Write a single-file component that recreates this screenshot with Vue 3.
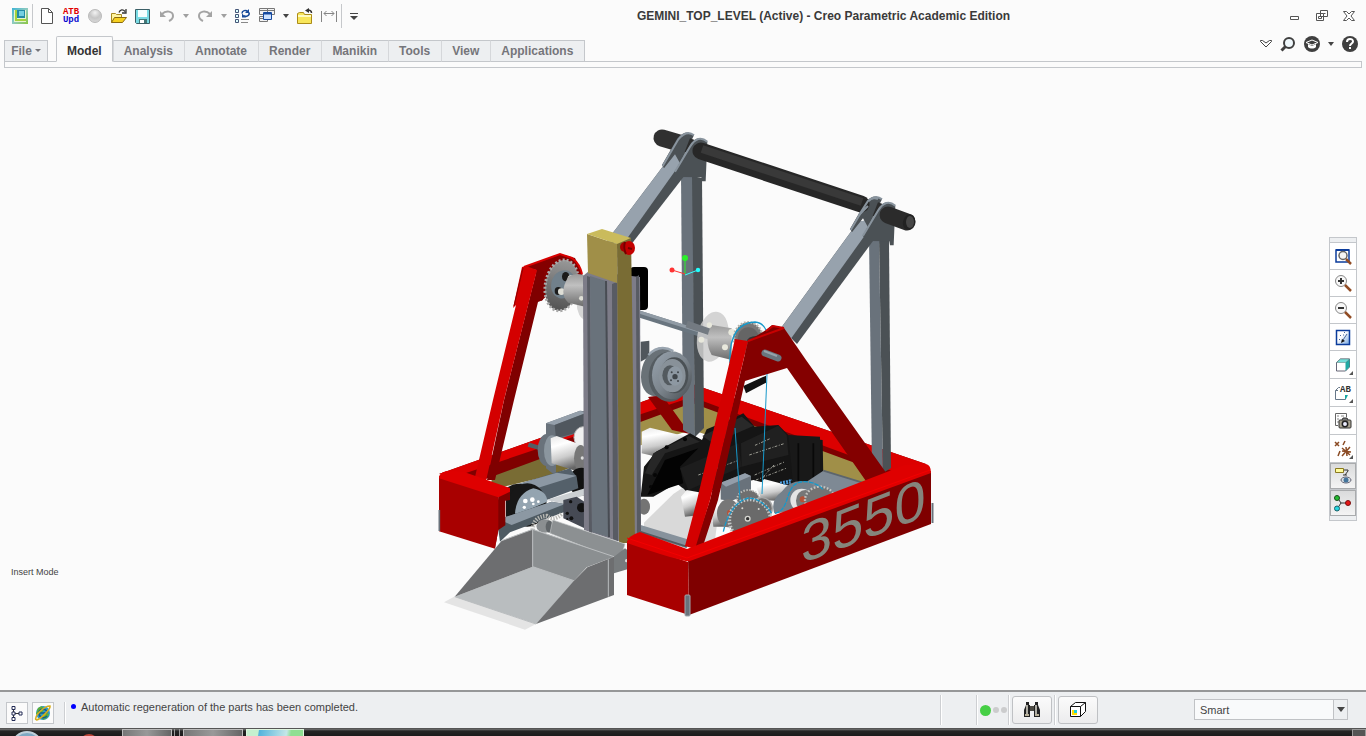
<script setup>
import { ref } from 'vue'

const tabs = ['Model', 'Analysis', 'Annotate', 'Render', 'Manikin', 'Tools', 'View', 'Applications']
const activeTab = ref('Model')
const filter = ref('Smart')
</script>

<template>
  <div class="app">
    <header class="titlebar">
      <div class="quick">
        <button class="tool" aria-label="Creo">
          <svg width="16" height="16" viewBox="0 0 16 16">
            <defs><linearGradient id="appg" x1="0" y1="0" x2="1" y2="1"><stop offset="0" stop-color="#3fb4d4" /><stop offset=".5" stop-color="#8fcbc0" /><stop offset="1" stop-color="#8cc63e" /></linearGradient></defs>
            <rect width="16" height="16" fill="url(#appg)" /><rect x="2" y="2" width="12" height="12" fill="#e6f4d0" /><path d="M3 2v11h11v-2H5V2z" fill="#a5d23c" /><rect x="5" y="2" width="8" height="8" fill="#238ba5" /><rect x="7" y="3" width="5" height="5" fill="#74cfe0" />
          </svg>
        </button>
        <span class="sep"></span>
        <button class="tool" aria-label="New">
          <svg width="16" height="16" viewBox="0 0 16 16"><path d="M2.500.5h7l4 4v11h-11z" fill="#fff" stroke="#555" /><path d="M9.500.5v4h4" fill="none" stroke="#555" /></svg>
        </button>
        <button class="tool atb" aria-label="ATB Update"><span class="red">ATB</span><span class="blue">Upd</span></button>
        <button class="tool" aria-label="Stop">
          <svg width="16" height="16" viewBox="0 0 16 16"><defs><radialGradient id="ball" cx=".5" cy=".25" r=".75"><stop offset="0" stop-color="#f2f2f2" /><stop offset=".55" stop-color="#c6c6c6" /><stop offset="1" stop-color="#d9d9d9" /></radialGradient></defs><circle cx="8" cy="8" r="6.500" fill="url(#ball)" stroke="#bbb" /></svg>
        </button>
        <button class="tool" aria-label="Open">
          <svg width="16" height="16" viewBox="0 0 16 16"><path d="M.5 14.500v-9h4l1 1h5v3" fill="#fff5a0" stroke="#a88a20" /><path d="M.5 14.500l3-5h12l-4 5z" fill="#f6d020" stroke="#8a6a10" /><path d="M8 4.500c1-3 4-3.500 6-1M15 1v4h-4" fill="none" stroke="#333" stroke-width="1.300" /></svg>
        </button>
        <button class="tool" aria-label="Save">
          <svg width="16" height="16" viewBox="0 0 16 16"><path d="M.5 1.500h14v14h-13l-1-1z" fill="#79dbe4" stroke="#3b5f66" /><rect x="3" y="2" width="9" height="7" fill="#f5ffff" /><rect x="4" y="11" width="8" height="4" fill="#477" /><rect x="5" y="12" width="4" height="3" fill="#fff" /></svg>
        </button>
        <button class="tool" aria-label="Undo">
          <svg width="16" height="16" viewBox="0 0 16 16"><path d="M3 6c4-4 11-3 11 2 0 3-2 4-4 5" fill="none" stroke="#a4a4a4" stroke-width="2" /><path d="M1 3v6h6z" fill="#a4a4a4" /></svg>
        </button>
        <button class="drop" aria-label="Undo list"><i class="tri pale"></i></button>
        <button class="tool" aria-label="Redo">
          <svg width="16" height="16" viewBox="0 0 16 16"><path d="M13 6C9 2 2 3 2 8c0 3 2 4 4 5" fill="none" stroke="#a4a4a4" stroke-width="2" /><path d="M15 3v6H9z" fill="#a4a4a4" /></svg>
        </button>
        <button class="drop" aria-label="Redo list"><i class="tri pale"></i></button>
        <button class="tool" aria-label="Regenerate">
          <svg width="16" height="16" viewBox="0 0 16 16"><path d="M.5 1.500h3v3h-3zM.5 6.500h3v3h-3zM.5 11.500h3v3h-3z" fill="#dff" stroke="#457" /><path d="M6 11.500h8M6 14.500h7" stroke="#888" /><path d="M7 5.500c0-3 4-4 5.500-2M14 4.500c1 3-3 5-5 3" fill="none" stroke="#174a9a" stroke-width="1.500" /><path d="M14 1v4h-4zM7 9.500v-4l4 4z" fill="#174a9a" /></svg>
        </button>
        <button class="tool" aria-label="Windows">
          <svg width="16" height="16" viewBox="0 0 16 16"><path d="M.5.500h8v6h-8zM8.500.5h7v6h-7zM.5 8.500h8v5h-8z" fill="#f3f3f3" stroke="#777" /><path d="M1 2.500h7M9 2.500h6M1 10.500h7" stroke="#777" /><path d="M4.500 4.500h8v7h-8z" fill="#cfe3ff" stroke="#164aa0" /><path d="M5 5.500h7" stroke="#164aa0" stroke-width="2" /></svg>
        </button>
        <button class="drop" aria-label="Window list"><i class="tri"></i></button>
        <button class="tool" aria-label="Close folder">
          <svg width="16" height="16" viewBox="0 0 16 16"><path d="M.5 15.500v-10l2-1h4l1 2h7v9z" fill="#f8e65a" stroke="#ac8c18" /><path d="M1 8h13" stroke="#fffbc0" stroke-width="2" /><path d="M14.500 5c0-3-2-3-4-3" fill="none" stroke="#333" stroke-width="1.500" /><path d="M8 2.500l4-2.500v5z" fill="#333" /></svg>
        </button>
        <button class="tool" aria-label="Spacing">
          <svg width="16" height="16" viewBox="0 0 16 16"><path d="M.5 3v11M15.500 3v11M3 5.500h10M5.500 3L3 5.500 5.500 8M10.500 3L13 5.500 10.500 8" fill="none" stroke="#858585" /></svg>
        </button>
        <span class="sep last"></span>
        <button class="tool" aria-label="Customize">
          <svg width="16" height="16" viewBox="0 0 16 16"><path d="M4 5.500h8" stroke="#444" /><path d="M4 8h8l-4 4z" fill="#444" /></svg>
        </button>
      </div>
      <h1>GEMINI_TOP_LEVEL (Active) - Creo Parametric Academic Edition</h1>
      <div class="winctl">
        <button aria-label="Minimize"><svg width="12" height="12" viewBox="0 0 12 12"><path d="M1.500 6.500h8v3h-8z" fill="#fff" stroke="#555" /></svg></button>
        <button aria-label="Restore"><svg width="12" height="12" viewBox="0 0 12 12"><path d="M4.500.5h7v6h-7zM.5 3.500h7v7h-7z" fill="#fff" stroke="#555" /><path d="M2.500 6.500h3v2h-3zM7.500 3.500h2" fill="none" stroke="#555" /></svg></button>
        <button aria-label="Close"><svg width="12" height="12" viewBox="0 0 12 12"><path d="M.5 1.500h3L6 4l2.500-2.500h3L8 6l3.500 4.500h-3L6 8l-2.500 2.500h-3L4 6z" fill="#fff" stroke="#555" /></svg></button>
      </div>
    </header>

    <nav class="tabs">
      <button class="file">File<i class="tri small"></i></button>
      <button v-for="t in tabs" :key="t" class="tab" :class="{ active: t === activeTab }" @click="activeTab = t">{{ t }}</button>
      <span class="fill"></span>
      <div class="helpers">
        <button aria-label="Collapse"><svg width="12" height="10" viewBox="0 0 12 10"><path d="M.5 1.500h2L6 4l3.500-2.500h2v1L6 8 .5 2.500z" fill="#fff" stroke="#444" /></svg></button>
        <button aria-label="Search"><svg width="16" height="16" viewBox="0 0 16 16"><circle cx="9" cy="7" r="5" fill="#f0f8fc" stroke="#3f3f3f" stroke-width="2" /><path d="M5.500 10.500L1.500 14.500" stroke="#3f3f3f" stroke-width="3" /></svg></button>
        <button aria-label="Learning"><svg width="16" height="16" viewBox="0 0 16 16"><circle cx="8" cy="8" r="8" fill="#3f3f3f" /><path d="M2 6.500L8 4l6 2.500L8 9z" fill="none" stroke="#fff" /><path d="M4 8v3c2 2 6 2 8 0V8L8 10z" fill="#fff" /></svg></button>
        <button aria-label="Learning list"><i class="tri"></i></button>
        <button aria-label="Help"><svg width="16" height="16" viewBox="0 0 16 16"><circle cx="8" cy="8" r="8" fill="#3f3f3f" /><path d="M5 6c0-4 6-4 6-.5C11 7.500 8 7.500 8 10" fill="none" stroke="#fff" stroke-width="2" /><rect x="7" y="11" width="2" height="2" fill="#fff" /></svg></button>
      </div>
    </nav>
    <div class="ribbon"></div>

    <main class="canvas">
      <svg class="model" viewBox="0 68 1366 622" role="img" aria-label="Robot assembly">
        <defs>
          <linearGradient id="cyl" x1="0" y1="0" x2=".3" y2="1"><stop offset="0" stop-color="#e8e8e8" /><stop offset=".3" stop-color="#fff" /><stop offset=".65" stop-color="#ccc" /><stop offset="1" stop-color="#666" /></linearGradient>
          <linearGradient id="drum" x1="0" y1="0" x2="0" y2="1"><stop offset="0" stop-color="#9a9a9a" /><stop offset=".35" stop-color="#c0c0c0" /><stop offset="1" stop-color="#6c6c6c" /></linearGradient>
          <linearGradient id="disc" x1="0" y1="0" x2="0" y2="1"><stop offset="0" stop-color="#969696" /><stop offset="1" stop-color="#555" /></linearGradient>
          <linearGradient id="steel" x1="0" y1="0" x2="1" y2="1"><stop offset="0" stop-color="#98a3ae" /><stop offset=".5" stop-color="#7d868e" /><stop offset="1" stop-color="#474c50" /></linearGradient>
        </defs>

        <!-- rear rails -->
        <polygon points="494,472 692,398 900,472 868,486 692,430 490,490" fill="#a08f48" />
        <polygon points="493,472 640,418 640,440 552,475 490,490" fill="#796c34" />
        <polygon points="439,474 692,384 926,464 910,474 885,474 692,403 480,481" fill="#7f0000" />
        <polygon points="439,474 692,384 926,464 900,474 692,397 463,474" fill="#dc0000" />
        <polygon points="648,397 662,395 690,434 672,430" fill="#8a0000" />

        <!-- rear posts and braces -->
        <polygon points="681,174 693,176 695,437 683,430" fill="#69727b" />
        <polygon points="692,176 702,178 704,428 695,437" fill="#4b5155" />
        <polygon points="869,238 879,240 883,473 872,468" fill="#69727b" />
        <polygon points="879,238 889,241 891,468 883,473" fill="#4b5155" />
        <polygon points="606,242 673,153 685,157 692,166 630,246" fill="#4b5155" />
        <polygon points="606,242 673,153 685,157 626,240" fill="#97a2ad" />
        <polygon points="781,328 858,222 870,220 873,241 797,344" fill="#4b5155" />
        <polygon points="781,328 858,222 870,219 868,231 790,340" fill="#97a2ad" />

        <!-- cross pipe and brackets -->
        <path d="M662 138L679 143" stroke="#303030" stroke-width="17" stroke-linecap="round" />
        <g transform="translate(640 120) scale(.33333)">
          <g v-for="s in [[0, 0], [564, 192]]" :key="s[0]" :transform="`translate(${s[0]} ${s[1]})`">
            <path d="M66 135L112 55Q138 25 162 46L120 130L105 103L72 145z" fill="#4b5155" />
            <path d="M68 138L115 58Q140 28 162 46" fill="none" stroke="#89949e" stroke-width="6" />
            <path d="M142 75L160 82" stroke="#2c2c2c" stroke-width="44" />
            <path d="M104 155L148 78Q170 40 202 65L197 184L186 184L184 172L118 171z" fill="#4b5155" />
            <path d="M105 155L150 80Q174 42 202 65" fill="none" stroke="#89949e" stroke-width="6" />
          </g>
        </g>
        <path d="M701 151L861 204" stroke="#272727" stroke-width="17" stroke-linecap="round" />
        <path d="M702 149L862 202" stroke="#393939" stroke-width="8" />
        <path d="M868 206L859 215L868 201Q872 197 878 199" fill="none" stroke="#89949e" stroke-width="2" />
        <path d="M888 215L907 222" stroke="#2b2b2b" stroke-width="17" stroke-linecap="round" />
        <ellipse cx="909" cy="222" rx="6" ry="8" fill="#222" transform="rotate(18 909 222)" /><ellipse cx="910" cy="222" rx="4" ry="6" fill="#474747" />

        <!-- drive shaft -->
        <path d="M636 313L712 337" stroke="#69757f" stroke-width="7" /><path d="M636 311L712 335" stroke="#909ba5" stroke-width="3" />

        <!-- hubs, pulley, electronics -->
        <g transform="translate(620 300) scale(.33333)">
          <ellipse cx="278" cy="110" rx="46" ry="76" fill="#ccc" opacity=".85" transform="rotate(12 278 110)" />
          <path d="M200 72L275 98" stroke="#737a81" stroke-width="20" />
          <path d="M275 75L335 85V180L275 165Q250 120 275 75" fill="url(#drum)" />
          <g fill="#e8e8dc"><circle cx="268" cy="75" r="8" /><circle cx="244" cy="119" r="9" /><circle cx="335" cy="97" r="10" /><circle cx="315" cy="142" r="9" /></g>
          <ellipse cx="385" cy="115" rx="43" ry="48" fill="#777" stroke="#b5b5ac" stroke-width="8" stroke-dasharray="5 5" />
          <ellipse cx="385" cy="117" rx="32" ry="35" fill="#656565" /><ellipse cx="408" cy="124" rx="27" ry="16" fill="#333" />
          <path d="M330 190Q325 70 405 66Q428 68 438 90" fill="none" stroke="#1698ca" stroke-width="4" />
          <path d="M62 125L88 122V170L62 185z" fill="#50565c" />
          <ellipse cx="115" cy="215" rx="50" ry="75" fill="#697177" transform="rotate(15 115 215)" />
          <path d="M85 165Q118 130 160 153" stroke="#9aa5b0" stroke-width="7" fill="none" />
          <ellipse cx="148" cy="230" rx="62" ry="75" fill="#555c61" /><ellipse cx="156" cy="226" rx="60" ry="72" fill="url(#steel)" />
          <ellipse cx="163" cy="226" rx="42" ry="54" fill="#4b5155" /><ellipse cx="157" cy="227" rx="40" ry="50" fill="#889199" /><ellipse cx="150" cy="226" rx="23" ry="30" fill="#535a5f" /><ellipse cx="165" cy="228" rx="23" ry="29" fill="#8d98a2" />
          <g fill="#3f454a"><circle cx="165" cy="230" r="8" /><circle cx="155" cy="217" r="3" /><circle cx="174" cy="217" r="3" /><circle cx="153" cy="241" r="3" /><circle cx="174" cy="243" r="3" /></g>
          <polygon points="65,395 90,383 220,415 210,445 110,470 65,460" fill="url(#cyl)" />
          <polygon points="62,590 72,500 108,455 210,400 246,420 260,388 340,355 370,340 404,380 475,375 510,410 608,420 610,535 515,570 400,540 310,560 220,592 170,550 100,590" fill="#151515" />
          <polygon points="100,460 207,408 240,425 135,460 95,525 75,520" fill="#272727" />
          <polygon points="82,585 135,480 235,445 180,500 190,550" fill="#030303" />
          <polygon points="247,408 365,350 400,378 280,430" fill="#292929" />
          <polygon points="180,505 355,430 365,500 205,570" fill="#1d1d1d" />
          <polygon points="363,430 475,377 500,405 505,465 365,500" fill="#202020" />
          <polygon points="505,405 600,410 600,535 520,560" fill="#191919" /><path d="M535 430V545M580 430V540" stroke="#090909" stroke-width="5" />
          <g stroke="#9d9d94" stroke-width="3" fill="none" stroke-dasharray="8 5 3 4"><path d="M405 436L450 416M388 465L495 430M235 525L350 483M404 525L495 485M408 540L498 505M430 530L462 495" /></g>
          <g fill="#060606"><circle cx="140" cy="442" r="6" /><circle cx="195" cy="418" r="6" /><circle cx="105" cy="525" r="6" /><circle cx="92" cy="560" r="5" /></g>
          <polygon points="370,258 438,227 438,248 378,280" fill="#111" />
        </g>

        <!-- floor and right drive train -->
        <g transform="translate(620 440) scale(.33333)">
          <polygon points="72,248 160,162 188,143 290,260 285,300 210,318 72,270" fill="#d9d9d9" />
          <polygon points="62,255 210,300 200,325 60,282" fill="#87929c" /><path d="M62 276L200 320" stroke="#535a60" stroke-width="6" />
          <ellipse cx="72" cy="200" rx="18" ry="24" fill="#747474" />
          <polygon points="183,170 200,150 245,158 245,225 195,230" fill="url(#cyl)" />
          <polygon points="302,128 375,100 393,108 393,160 302,195" fill="#69727b" /><polygon points="302,128 375,100 393,108 318,140" fill="#939eaa" />
          <polygon points="410,145 432,117 520,140 520,185 425,180" fill="url(#cyl)" />
          <polygon points="560,125 610,92 735,130 640,170 570,175" fill="#7e8994" /><path d="M610 92L735 130" stroke="#5c656d" stroke-width="5" />
          <polygon points="272,195 292,177 348,185 350,260 280,260" fill="url(#cyl)" /><ellipse cx="325" cy="220" rx="34" ry="42" fill="#777" /><circle cx="330" cy="218" r="9" fill="#b65137" />
          <path d="M463 220Q450 180 485 155Q515 115 560 125Q580 130 590 150L520 215z" fill="#75808a" />
          <ellipse cx="545" cy="180" rx="34" ry="34" fill="#e4e4e4" /><ellipse cx="556" cy="182" rx="28" ry="32" fill="#777" /><circle cx="548" cy="178" r="9" fill="#b65137" />
          <ellipse cx="600" cy="180" rx="45" ry="40" fill="#747474" stroke="#c5c5c0" stroke-width="7" stroke-dasharray="5 5" />
          <ellipse cx="385" cy="180" rx="34" ry="30" fill="#6f6f6f" stroke="#c5c5c0" stroke-width="6" stroke-dasharray="4 5" />
          <ellipse cx="425" cy="205" rx="32" ry="32" fill="#717171" stroke="#aaa" stroke-width="4" />
          <ellipse cx="390" cy="240" rx="62" ry="62" fill="#6a6a6a" stroke="#c2c5c5" stroke-width="11" stroke-dasharray="5 5" />
          <g fill="#d5d5d0"><circle cx="383" cy="236" r="9" /><circle cx="367" cy="205" r="3" /><circle cx="416" cy="207" r="3" /><circle cx="421" cy="246" r="3" /></g><circle cx="383" cy="236" r="5" fill="#333" />
          <path d="M310 275Q330 190 385 174Q425 175 455 220M465 220C515 210 490 128 550 125Q590 125 610 150" fill="none" stroke="#1698ca" stroke-width="4" stroke-dasharray="14 3" />
          <path d="M480 128L516 120M490 132L512 128" stroke="#4f9fe0" stroke-width="6" stroke-dasharray="6 3" />
        </g>

        <!-- left drive train -->
        <g transform="translate(430 400) scale(.33333)">
          <polygon points="348,70 450,32 485,35 485,85 378,120 378,228 348,205" fill="#69727b" /><polygon points="348,70 450,32 470,38 374,75" fill="#95a0ab" /><polygon points="374,75 470,38 470,90 378,115" fill="#50575e" />
          <ellipse cx="460" cy="112" rx="28" ry="32" fill="#f0f0f0" stroke="#bbb" stroke-width="3" />
          <path d="M295 134L350 150" stroke="#555d63" stroke-width="13" />
          <ellipse cx="350" cy="150" rx="27" ry="48" fill="#69727b" /><ellipse cx="366" cy="152" rx="24" ry="46" fill="#8b969f" />
          <polygon points="362,115 380,108 455,135 466,165 460,210 440,214 365,190" fill="url(#cyl)" /><ellipse cx="452" cy="175" rx="20" ry="40" fill="#777" /><circle cx="457" cy="174" r="5" fill="#ddd" />
          <ellipse cx="455" cy="245" rx="40" ry="42" fill="#111" />
          <polygon points="255,255 420,205 440,230 445,265 350,300 290,300" fill="#54606a" /><polygon points="255,255 380,218 440,227 320,265" fill="#8c98a4" />
          <path d="M228 355V265Q265 238 300 265L290 360z" fill="#171717" /><ellipse cx="292" cy="315" rx="58" ry="65" fill="#171717" />
          <path d="M255 340Q260 280 310 265Q350 272 352 305L260 345z" fill="#94a4b0" /><g fill="#fff"><circle cx="286" cy="303" r="7" /><circle cx="307" cy="299" r="7" /><circle cx="283" cy="322" r="5" /><circle cx="310" cy="312" r="4" /><circle cx="325" cy="305" r="4" /></g>
          <polygon points="350,300 465,265 465,285 395,310" fill="#ccd0d3" />
          <polygon points="205,358 365,305 405,312 405,335 240,397 210,425 205,390" fill="#4e5a62" /><polygon points="205,358 365,305 405,312 245,375" fill="#8c98a3" />
          <polygon points="400,300 440,290 470,310 470,388 400,355" fill="#464a54" /><g fill="#111"><circle cx="422" cy="305" r="5" /><circle cx="412" cy="340" r="5" /><circle cx="424" cy="355" r="6" /><circle cx="412" cy="357" r="3" /><ellipse cx="455" cy="323" rx="14" ry="14" /></g>
        </g>

        <!-- left A-frame -->
        <polygon points="524,267 560,254 575,258 584,278 560,285 541,301 536,270" fill="#840000" />
        <path d="M524 267L560 254L572 258Q580 264 582 274" fill="none" stroke="#d80000" stroke-width="2" />
        <polygon points="537,269 544,271 543,300 538,302 514,400 495,480 487,480 504,400" fill="#7f0000" />
        <polygon points="513,308 522,267 526,266 537,270 504,400 486,481 475,477 493,400 516,305" fill="#d40000" />
        <path d="M514 306L523 268" stroke="#8d0000" stroke-width="1" />
        <g transform="translate(430 220) scale(.33333)">
          <ellipse cx="466" cy="250" rx="26" ry="48" fill="#d5d5d5" />
          <ellipse cx="395" cy="196" rx="49" ry="77" transform="rotate(10 395 196)" fill="url(#disc)" stroke="#aaa" stroke-width="9" stroke-dasharray="6 6" /><ellipse cx="397" cy="196" rx="46" ry="72" transform="rotate(10 397 196)" fill="url(#disc)" />
          <ellipse cx="400" cy="193" rx="36" ry="43" fill="#71808b" transform="rotate(18 400 193)" /><ellipse cx="385" cy="213" rx="11" ry="12" fill="#1b1b1b" /><ellipse cx="407" cy="170" rx="11" ry="14" fill="#1b1b1b" /><circle cx="394" cy="215" r="10" fill="#deded6" /><circle cx="422" cy="175" r="9" fill="#deded6" />
          <path d="M415 170Q440 155 465 167V260L415 248Q385 220 415 170" fill="url(#drum)" /><circle cx="454" cy="235" r="7" fill="#deded6" />
        </g>

        <!-- mast -->
        <rect x="630" y="267" width="18" height="43" rx="4" fill="#000" />
        <polygon points="583,276 589,271 640,277 641,540 617,541 584,530" fill="#7d7c88" />
        <polygon points="587,276 590,277 592,533 589,532" fill="#585b63" />
        <polygon points="590,276 606,281 609,537 592,532" fill="#69727b" />
        <polygon points="605,281 607,281 610,537 608,537" fill="#484c53" />
        <polygon points="612,284 617,282 618,541 613,539" fill="#585b63" />
        <polygon points="636,277 639,275 641,540 637,540" fill="#585b63" />
        <polygon points="617,243 631,238 632,300 635,543 619,543" fill="#796c34" />
        <polygon points="587,234 617,244 617,283 588,273" fill="#a08f48" />
        <polygon points="587,234 602,229 631,238 617,244" fill="#cabb5c" />
        <circle cx="625" cy="247" r="5" fill="#a80000" /><ellipse cx="629" cy="248" rx="6" ry="7" fill="#c40000" /><path d="M625 242Q623 248 626 254M628 248L632 249" stroke="#750000" fill="none" stroke-width="2" />

        <!-- left bumper and bucket -->
        <g transform="translate(430 400) scale(.33333)">
          <polygon points="205,285 240,268 240,300 226,302 226,376 205,390 195,445" fill="#7f0000" />
          <path d="M27 228L205 288V390L195 446L27 394z" fill="#a80000" />
          <path d="M27 235Q27 218 48 214L100 215L240 264L240 275L205 292L27 235" fill="#df0000" />
          <path d="M28 330V393" stroke="#69727b" stroke-width="5" />
          <g fill="none" stroke="#b8b8b3" stroke-width="13" stroke-dasharray="4 4"><path d="M308 390Q310 350 350 348Q370 365 395 342" /></g><ellipse cx="345" cy="378" rx="26" ry="20" fill="#8b8f91" /><ellipse cx="358" cy="380" rx="11" ry="18" fill="#606568" />
          <polygon points="368,360 585,432 575,465 552,475 360,400" fill="#8c9092" stroke="#bfc2c4" stroke-width="2" />
          <polygon points="552,470 585,445 592,450 592,508 552,520" fill="#777b7d" /><circle cx="590" cy="482" r="5" fill="#ddd" />
          <polygon points="42,607 72,590 318,672 285,689" fill="#e4e4e4" />
          <polygon points="74,590 308,500 435,542 318,672" fill="#b9bdbf" />
          <polygon points="308,388 552,470 470,502 432,542 308,500" fill="#8b8f91" />
          <polygon points="215,422 308,388 308,500 74,590" fill="#6d6e70" />
          <polygon points="318,672 432,542 472,502 552,470 552,585" fill="#6d6e70" />
          <path d="M215 422L308 388L552 470M308 388V500L432 542M535 478V590M74 590L318 672" fill="none" stroke="#babdbf" stroke-width="3" />
        </g>

        <!-- right A-frame -->
        <polygon points="766,330 772,325 784,328 806,360 887,474 868,484 787,368 745,381 718,500 703,546 694,548 710,500 748,341" fill="#840000" />
        <polygon points="735,339 748,341 710,500 695,549 685,546 697,500" fill="#d40000" />
        <path d="M748 341L784 328M766 331L773 326L784 328" fill="none" stroke="#c80000" stroke-width="2" />
        <path d="M765 353L778 358" stroke="#69757f" stroke-width="7" stroke-linecap="round" /><path d="M764 351L777 356" stroke="#96a2ac" stroke-width="2" />
        <path d="M767 374L762 494M735 428L740 500" fill="none" stroke="#1698ca" stroke-width="1" />

        <!-- front bumper -->
        <path d="M688 556L931 471V524L689 615z" fill="#7f0000" />
        <polygon points="627,541 688,562 689,615 627,595" fill="#a80000" />
        <path d="M627 543Q627 536 640 532L687 549L905 465L926 464Q931 465 931 473L690 561Q685 563 627 543" fill="#df0000" />
        <path d="M627 538L687 558L930 470" fill="none" stroke="#f20000" stroke-width="1" />
        <rect x="685" y="595" width="5" height="21" rx="1" fill="#69727b" stroke="#a0a8ae" /><path d="M932.500 503V523" stroke="#69727b" stroke-width="2" />
        <text class="team" transform="translate(801 564) skewY(-21)">3550</text>

        <!-- spin centre -->
        <path d="M685 274V259" stroke="#2bf02b" stroke-width="1" /><path d="M685 274L672 270" stroke="#f33" /><path d="M685 275L698 270" stroke="#3ff" />
        <circle cx="685" cy="258" r="3" fill="#2bf02b" /><circle cx="672" cy="270" r="2.500" fill="#f33" /><circle cx="698" cy="270" r="2.200" fill="#2ff" />
      </svg>

      <p class="mode">Insert Mode</p>

      <div class="viewbar">
        <button aria-label="Refit"><svg width="16" height="16" viewBox="0 0 16 16"><path d="M1 2h13v12H1z" fill="#fff" stroke="#0b3c9c" stroke-width="1.500" /><path d="M1 2h13" stroke="#0b3c9c" stroke-width="2" /><circle cx="8" cy="7.500" r="4" fill="#f5f5f5" stroke="#666" stroke-width="1.500" /><path d="M11 11l5 5" stroke="#914c24" stroke-width="2.500" /></svg></button>
        <button aria-label="Zoom in"><svg width="16" height="16" viewBox="0 0 16 16"><circle cx="6" cy="6" r="5.500" fill="#f8f8f8" stroke="#888" /><path d="M6 3v6M3 6h6" stroke="#333" stroke-width="2" /><path d="M10 10l6 6" stroke="#914c24" stroke-width="2.500" /></svg></button>
        <button aria-label="Zoom out"><svg width="16" height="16" viewBox="0 0 16 16"><circle cx="6" cy="6" r="5.500" fill="#f8f8f8" stroke="#888" /><path d="M3 6h6" stroke="#333" stroke-width="2" /><path d="M10 10l6 6" stroke="#914c24" stroke-width="2.500" /></svg></button>
        <button aria-label="Repaint"><svg width="16" height="16" viewBox="0 0 16 16"><defs><linearGradient id="rep" x1="0" y1="0" x2="1" y2="1"><stop offset=".4" stop-color="#fff" /><stop offset="1" stop-color="#6ea2e0" /></linearGradient></defs><path d="M1.500 1.500h13v14h-13z" fill="url(#rep)" stroke="#0b3c9c" stroke-width="1.500" /><path d="M4 11l1-1M5 7l1-1M9 4l1-1M8 6h1M12 5l-4 6" stroke="#47689c" /><path d="M6 14l1-4 3 2z" fill="#111" /></svg></button>
        <button class="tall more" aria-label="Display style"><svg width="16" height="16" viewBox="0 0 16 16"><path d="M1.500 5.500l4-3.500h9v8l-4 4h-9z" fill="#fff" stroke="#667" /><path d="M10.500 5.500l4-3.500v8l-4 4z" fill="#1faaa4" /><path d="M1.500 5.500l4-3.500h9l-4 3.500z" fill="#74dfda" stroke="#577" stroke-width=".5" /></svg></button>
        <button class="tall more" aria-label="Saved orientations"><svg width="16" height="16" viewBox="0 0 16 16"><path d="M3 5.500H.5v9h10V10M.5 5.500l3-3H5" fill="none" stroke="#678" /><path d="M10 10h3l-2 4h-1z" fill="#19a5a1" /><text class="ab" x="5" y="7">AB</text></svg></button>
        <button class="tall" aria-label="View manager"><svg width="16" height="16" viewBox="0 0 16 16"><path d="M3 12.500H.5v-12h11V4" fill="#fff" stroke="#666" /><path d="M2 3h2M2 6h2M2 9h2M6 3h3" stroke="#888" /><rect x="4" y="7" width="12" height="8" rx="1" fill="#aaa391" stroke="#333" /><path d="M7 7l1-2h4l1 2" fill="#777" stroke="#333" /><circle cx="10" cy="11" r="2.700" fill="#eef" stroke="#222" stroke-width="1.500" /></svg></button>
        <button class="tall more" aria-label="Datum display"><svg width="16" height="16" viewBox="0 0 16 16"><path d="M0 1l4 4M4 1L0 5M10 0L8 4M5 10l-2 5M7 7l8 7M15 6L7 15M7 10l9 1M11 6l1 9" stroke="#8a4a23" stroke-width="1.500" /></svg></button>
        <button class="pressed" aria-label="Annotation display"><svg width="16" height="18" viewBox="0 0 16 18"><path d="M.5 1.500h8v4h-8z" fill="#fffc9d" stroke="#8b7a20" /><path d="M9 3h4v1l-3 4M8 8h4" fill="none" stroke="#333" /><ellipse cx="11" cy="13" rx="5" ry="3" fill="#d9e0e5" stroke="#667" /><circle cx="11" cy="13" r="2.500" fill="#44749b" /></svg></button>
        <button class="pressed" aria-label="Spin center"><svg width="18" height="18" viewBox="0 0 18 18"><path d="M3 3l4 6-4 6M7 9h7" fill="none" stroke="#333" /><circle cx="3" cy="4" r="2.500" fill="#25bd32" stroke="#174b18" /><circle cx="14" cy="9" r="2.500" fill="#e81515" stroke="#7a1010" /><circle cx="3" cy="14.500" r="2.500" fill="#25d5df" stroke="#186068" /></svg></button>
      </div>
    </main>

    <footer class="status">
      <button class="mini" aria-label="Model tree"><svg width="14" height="16" viewBox="0 0 14 16"><path d="M3.500 3v11M4 8.500h5" stroke="#333" /><path d="M2 1.500h3v3H2zM2 7h3v3H2zM2 12.500h3v3H2zM9 7h3v3H9z" fill="#fff" stroke="#222b55" /></svg></button>
      <button class="mini" aria-label="Browser"><svg width="16" height="16" viewBox="0 0 16 16"><circle cx="8" cy="8" r="7" fill="#2d9bc7" /><path d="M3 3l4-2 2 4-4 5-4-1zM10 7l4 2-2 4-4 2-1-4z" fill="#5caf33" /><path d="M4 8h8M4 8c0-5 8-5 8 0M4 8c0 5 5 6 8 3" fill="none" stroke="#125b94" stroke-width="1.500" /><path d="M1 15C-1 11 9 1 15 1c1 3-10 14-14 14" fill="none" stroke="#d6ae1e" stroke-width="1.600" /></svg></button>
      <span class="vsep first"></span>
      <p class="message"><i></i>Automatic regeneration of the parts has been completed.</p>
      <span class="vsep"></span><span class="blank"></span><span class="vsep"></span>
      <span class="lights"><i class="go"></i><i></i><i></i></span>
      <span class="vsep"></span>
      <button class="big" aria-label="Find"><svg width="18" height="18" viewBox="0 0 18 18"><path d="M3 1h3v3h1v12H1V9l2-5zM12 1h3v3l2 5v7h-6V4h1z" fill="#222" /><path d="M7 5h4v5H7z" fill="#4c4a42" /><path d="M4 4v11M13 4v11" stroke="#dedbd0" stroke-width="1.500" /><path d="M2 14h4M12 14h4" stroke="#b9b19a" stroke-width="2" /></svg></button>
      <span class="vsep"></span>
      <button class="big" aria-label="Select geometry"><svg width="18" height="18" viewBox="0 0 18 18"><path d="M1.500 5.500l5-4h10v9l-5 5h-10zM1.500 5.500h10v10M11.500 5.500l5-4" fill="#fff" stroke="#111" /><path d="M3 9h5v5H3z" fill="#fd0" /><path d="M5 9h3v3H5z" fill="#20cfd8" /></svg></button>
      <label class="combo"><select v-model="filter" aria-label="Selection filter"><option>Smart</option><option>Geometry</option><option>Part</option></select><span class="arrow"><i class="tri"></i></span></label>
    </footer>

    <div class="taskbar">
      <i class="orb"></i><i class="red-app"></i><i class="task"></i><i class="edge"></i><i class="task second"></i><i class="task green"></i><i class="desk"></i>
    </div>
  </div>
</template>

<style>
body { margin: 0; background: #fbfbfb; }
</style>

<style scoped>
* { box-sizing: border-box; }
.app { display: flex; flex-direction: column; height: 100vh; overflow: hidden; background: #fbfbfb; color: #444; font: 12px "Liberation Sans", Arial, sans-serif; }
button { display: flex; align-items: center; justify-content: center; padding: 0; border: 0; background: none; font: inherit; color: inherit; }
svg { display: block; flex: none; overflow: visible; }
p, h1 { margin: 0; }

.titlebar { display: flex; align-items: center; height: 32px; flex: none; padding-right: 4px; }
.quick { display: flex; align-items: center; height: 32px; padding-left: 8px; }
.tool { width: 24px; height: 24px; }
.drop { width: 14px; height: 24px; }
.sep { width: 1px; height: 24px; margin-right: 2px; background: #c6c8cb; }
.sep.last { margin: 0; }
.atb { flex-direction: column; font: bold 9px/8px "Liberation Mono", monospace; }
.red { color: #e00000; }
.blue { color: #0808d0; }
.tri { width: 0; height: 0; border: 3px solid transparent; border-top: 4px solid #444; border-bottom: 0; }
.tri.pale { border-top-color: #a0a0a0; }
.tri.small { margin-left: 3px; border-top-width: 3px; border-top-color: #75757a; }
h1 { flex: 1; text-align: center; font-size: 12px; font-weight: bold; color: #3a3a3a; white-space: nowrap; }
.winctl { display: flex; }
.winctl button { width: 27px; height: 24px; }

.tabs { display: flex; align-items: flex-end; height: 30px; flex: none; margin: 0 4px; }
.file, .tab { height: 22px; border: 1px solid #c4c7cb; border-left-color: #d5d7da; border-right: 0; background: #edeff1; font-weight: bold; color: #75757a; }
.tab { padding: 0 11px 1px 10px; }
.file { width: 44px; margin-right: 8px; border: 1px solid #c4c7cb; padding-bottom: 1px; position: relative; }
.file::after { content: ""; position: absolute; left: 43px; bottom: -1px; width: 8px; height: 1px; background: #c4c7cb; }
.tab.active { height: 26px; padding: 3px 10px 0; border: 1px solid #c4c7cb; border-bottom-color: #fbfbfb; border-radius: 2px 2px 0 0; background: #fbfbfb; color: #333; }
.fill { flex: 1; height: 22px; border-left: 1px solid #c4c7cb; border-bottom: 1px solid #c4c7cb; }
.helpers { display: flex; align-items: center; align-self: stretch; padding-bottom: 6px; border-bottom: 1px solid #c4c7cb; gap: 8px; padding-right: 4px; }
.ribbon { height: 6px; flex: none; margin: 0 4px; border: 1px solid #c4c7cb; border-top: 0; }

.canvas { position: relative; flex: 1; min-height: 0; }
.model { width: 100%; height: 100%; overflow: hidden; }
.team { font: 56px "Liberation Sans", Arial, sans-serif; fill: #85857c; }
.ab { font: bold 9px "Liberation Mono", monospace; fill: #333; }
.mode { position: absolute; left: 11px; bottom: 113px; font-size: 9px; line-height: 10px; }
.viewbar { position: absolute; right: 9px; top: 50%; transform: translateY(-50%); width: 28px; padding-top: 4px; padding-bottom: 4px; border: 1px solid #c4c7cb; background: #edeff1; }
.viewbar button { position: relative; width: 26px; height: 27px; border-top: 1px solid #c4c7cb; background: #fff; }
.viewbar .tall { height: 28px; }
.viewbar .pressed { background: linear-gradient(#d9dadb, #f5f5f5); box-shadow: inset 0 0 0 1px #a9abad; }
.more::after { content: ""; position: absolute; right: 3px; bottom: 3px; border: 2px solid #555; border-top-color: transparent; border-left-color: transparent; }

.status { display: flex; align-items: center; height: 38px; flex: none; padding: 0 18px 0 6px; border-top: 2px solid #969798; background: #edeff1; }
.mini { width: 22px; height: 22px; margin: 5px 4px 0 0; border: 1px solid #c4c7cb; background: #fbfbfb; }
.vsep { width: 2px; height: 30px; border-left: 1px solid #cdcfd2; border-right: 1px solid #fff; }
.vsep.first { height: 22px; margin: 5px 5px 0 6px; }
.message { display: flex; align-items: center; flex: 1; padding-bottom: 7px; font-size: 11px; white-space: nowrap; }
.message i { width: 5px; height: 5px; margin-right: 5px; border-radius: 50%; background: #00f; }
.blank { width: 34px; }
.lights { display: flex; align-items: center; gap: 2px; width: 30px; padding-left: 2px; }
.lights i { width: 6px; height: 6px; border-radius: 50%; background: #cbcccd; }
.lights .go { width: 11px; height: 11px; background: #45cf45; }
.big { width: 40px; height: 28px; margin: 0 2px; border: 1px solid #bfc1c4; border-radius: 3px; background: linear-gradient(#fbfbfb, #ececed); }
.combo { position: relative; width: 154px; margin: 0 0 1px 94px; }
.combo select { display: block; width: 100%; height: 21px; padding: 0 5px; border: 1px solid #c0c2c5; border-radius: 0; appearance: none; background: #f9fafb; color: #444; font: 11px "Liberation Sans", Arial, sans-serif; }
.arrow { position: absolute; top: 1px; right: 1px; bottom: 1px; display: flex; align-items: center; width: 14px; padding-left: 3px; border-left: 1px solid #c0c2c5; background: #edeff1; pointer-events: none; }
.arrow .tri { border-width: 5px 4px 0; }

.taskbar { position: relative; display: flex; height: 8px; flex: none; overflow: hidden; border-top: 1px solid #555; background: linear-gradient(#777, #252525 2px, #1b1b1b); }
.orb { width: 30px; height: 28px; margin: 2px 0 0 12px; border-radius: 50%; background: #7ea8c2; border: 2px solid #bfd0da; }
.red-app { width: 18px; height: 18px; margin: 5px 0 0 38px; border-radius: 50%; background: #bd4639; }
.task { width: 50px; height: 8px; margin-left: 24px; border: 1px solid #bbb; border-bottom: 0; background: linear-gradient(90deg, #777, #999, #666); }
.edge { width: 6px; height: 8px; margin-left: 2px; border-left: 1px solid #999; border-right: 1px solid #999; }
.second { width: 60px; margin-left: 3px; }
.green { width: 58px; margin-left: 3px; border-color: #dff5df; background: linear-gradient(100deg, #c5f0cf 20%, #54b3dc 22%, #c4e7e8 70%, #8fdf93 78%); }
.desk { width: 14px; height: 8px; margin-left: auto; border: 1px solid #999; background: #555; }
</style>
